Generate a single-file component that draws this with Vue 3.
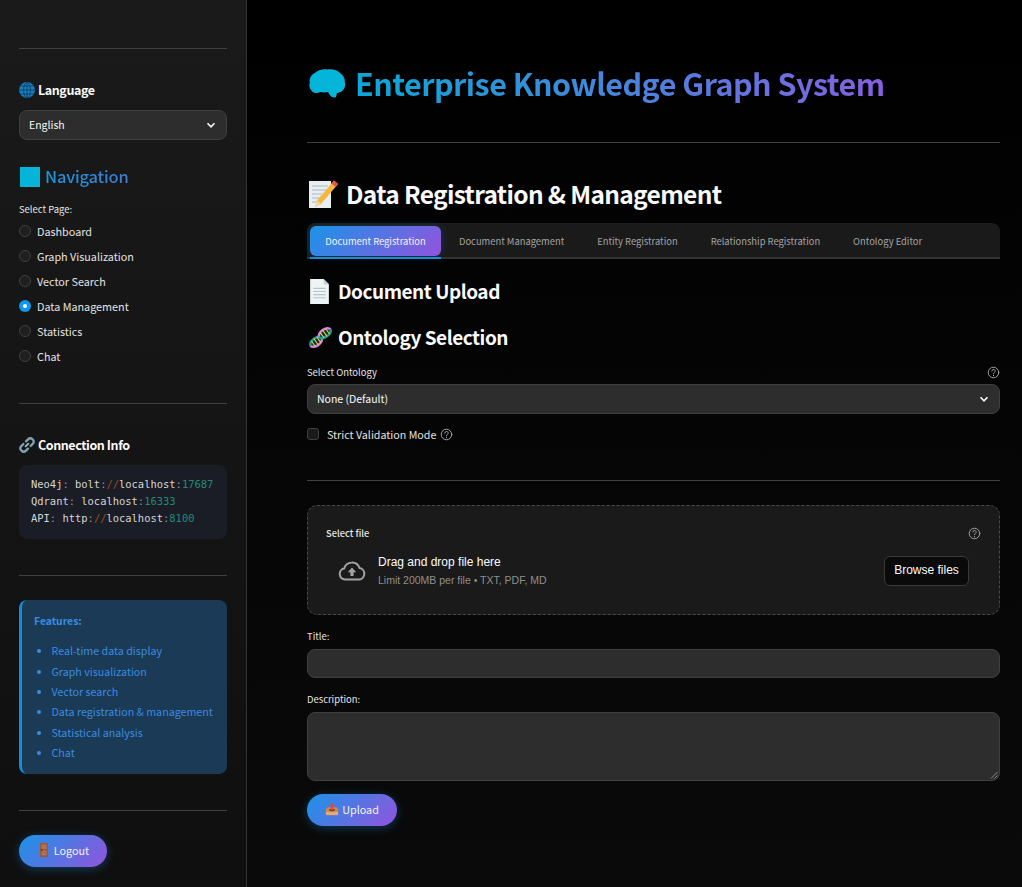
<script setup>
const pages = [
  { name: 'Dashboard' },
  { name: 'Graph Visualization' },
  { name: 'Vector Search' },
  { name: 'Data Management', active: true },
  { name: 'Statistics' },
  { name: 'Chat' }
]

const features = [
  'Real-time data display',
  'Graph visualization',
  'Vector search',
  'Data registration & management',
  'Statistical analysis',
  'Chat'
]

const tabs = [
  'Document Registration',
  'Document Management',
  'Entity Registration',
  'Relationship Registration',
  'Ontology Editor'
]
</script>

<template>
  <div class="app">
    <aside class="sidebar">
      <hr class="rule first" />

      <h4 class="side-head lang-head">
        <svg class="emoji" viewBox="0 0 16 16">
          <circle cx="8" cy="8" r="7.9" fill="#1a80c0" />
          <g fill="none" stroke="#0b3f66" stroke-width="0.9">
            <ellipse cx="8" cy="8" rx="3.4" ry="7.8" />
            <path d="M8 .2v15.600M.2 8h15.600M1.600 4h12.800M1.600 12h12.800" />
          </g>
        </svg>
        Language
      </h4>
      <div class="select side-select">
        <span>English</span>
        <svg class="chev" viewBox="0 0 12 12"><path d="M2.500 4.300 6 7.800l3.500-3.500" /></svg>
      </div>

      <h3 class="nav-head">
        <span class="nav-square"></span>
        <span class="nav-text">Navigation</span>
      </h3>
      <div class="small-label">Select Page:</div>
      <ul class="radios">
        <li v-for="p in pages" :key="p.name" class="radio-row">
          <span class="radio" :class="{ on: p.active }"></span>
          {{ p.name }}
        </li>
      </ul>

      <hr class="rule r2" />

      <h4 class="side-head conn-head">
        <svg class="emoji" viewBox="0 0 16 16" fill="none" stroke-linecap="round">
          <path d="M6.600 9.400 9.400 6.600" stroke="#9dbcc6" stroke-width="1.800" />
          <path d="M7 4.400 9.300 2.100a2.700 2.700 0 0 1 3.900 0l.7.7a2.700 2.700 0 0 1 0 3.900L11.600 9" stroke="#7fa3b0" stroke-width="2.300" />
          <path d="M9 11.600 6.700 13.900a2.700 2.700 0 0 1-3.900 0l-.7-.7a2.700 2.700 0 0 1 0-3.900L4.400 7" stroke="#7fa3b0" stroke-width="2.300" />
        </svg>
        Connection Info
      </h4>
      <pre class="code">Neo4j<i>:</i> bolt<i>:</i><b>//</b>localhost<i>:</i><em>17687</em>
Qdrant<i>:</i> localhost<i>:</i><em>16333</em>
API<i>:</i> http<i>:</i><b>//</b>localhost<i>:</i><em>8100</em></pre>

      <hr class="rule r3" />

      <div class="features">
        <div class="features-title">Features:</div>
        <ul>
          <li v-for="f in features" :key="f">{{ f }}</li>
        </ul>
      </div>

      <hr class="rule r4" />

      <button class="pill logout">
        <svg class="btn-emoji" viewBox="0 0 8 14">
          <rect x="0" y="0" width="8" height="14" fill="#9c5a3c" />
          <rect x="1.500" y="1.500" width="5" height="4.500" fill="#b5704e" />
          <rect x="1.500" y="7.500" width="5" height="5" fill="#b5704e" />
          <rect x="1" y="6.200" width="1.600" height="1.600" fill="#6b3a24" />
        </svg>
        Logout
      </button>
    </aside>

    <main class="main">
      <h1 class="title">
        <svg class="brain" viewBox="0 0 40 32">
          <path d="M20 .5C25-.5 31 1 33.500 4 37 6 39.500 10 39 14c1.500 4 0 9-4 11-2 1-4 1-5 2 0 2 0 4.500-2 4.500-4 .5-6-3.500-7.500-6-3.500.5-6 .5-8.500 0-3 1.500-8 1.500-9.500-1.500C0 22-.5 18 .5 15-.5 11 2 6 6 4.500 9 1.500 15-.5 20 .5z" fill="#05b5d9" />
        </svg>
        <span class="title-text">Enterprise Knowledge Graph System</span>
      </h1>
      <hr class="rule main-r1" />

      <h2 class="page-head">
        <svg class="memo" viewBox="0 0 30 30">
          <rect x="1" y="2" width="22" height="27" fill="#e8eef2" />
          <path d="M4 7h16M4 11h14M4 15h10M4 19h8M4 23h6" stroke="#a9b6bd" stroke-width="1.200" />
          <path d="M26 1.500 30 5 13 25l-6 3 2-6.500z" fill="#f6b73c" />
          <path d="M26 1.500 30 5l-2.500 3-4-3.500z" fill="#e2574c" />
          <path d="M7 28l2-6.500 4 3.500z" fill="#f1d6a8" />
        </svg>
        Data Registration &amp; Management
      </h2>

      <nav class="tabs">
        <div v-for="(t, i) in tabs" :key="t" class="tab" :class="{ active: i === 0 }">{{ t }}</div>
      </nav>

      <h3 class="sec-head doc-head">
        <svg class="sec-icon" viewBox="0 0 24 24">
          <path d="M3 0h13l5 5v19H3z" fill="#eef3f6" />
          <path d="M16 0l5 5h-5z" fill="#bcd0dc" />
          <path d="M6 9h12M6 12h12M6 15h12M6 18h12" stroke="#b6c4cc" stroke-width="1.100" />
        </svg>
        Document Upload
      </h3>
      <h3 class="sec-head onto-head">
        <svg class="sec-icon" viewBox="-2 -1 26 26" fill="none">
          <g transform="rotate(-35 7.500 16.500)">
            <ellipse cx="7.500" cy="16.500" rx="7" ry="4" fill="#16302f" />
            <path d="M.5 16.500a7 4 0 0 1 14 0" stroke="#17a08e" stroke-width="2.600" />
            <path d="M.5 16.500a7 4 0 0 0 14 0" stroke="#e07ee0" stroke-width="2.600" />
            <path d="M4 13v7M7.500 12.500v8M11 13v7" stroke="#d9d84a" stroke-width="1.100" />
          </g>
          <g transform="rotate(-35 16.500 7.500)">
            <ellipse cx="16.500" cy="7.500" rx="7" ry="4" fill="#16302f" />
            <path d="M9.500 7.500a7 4 0 0 1 14 0" stroke="#e07ee0" stroke-width="2.600" />
            <path d="M9.500 7.500a7 4 0 0 0 14 0" stroke="#17a08e" stroke-width="2.600" />
            <path d="M13 4v7M16.500 3.500v8M20 4v7" stroke="#d9d84a" stroke-width="1.100" />
          </g>
        </svg>
        Ontology Selection
      </h3>

      <div class="label-row">
        <span class="small-label">Select Ontology</span>
        <svg class="help" viewBox="0 0 16 16"><circle cx="8" cy="8" r="6.500" /><path d="M6 6.300a2 2 0 1 1 3 1.700c-.7.400-1 .8-1 1.500" /><path d="M8 11.500v.5" /></svg>
      </div>
      <div class="select">
        <span>None (Default)</span>
        <svg class="chev" viewBox="0 0 12 12"><path d="M2.500 4.300 6 7.800l3.500-3.500" /></svg>
      </div>

      <div class="check-row">
        <span class="checkbox"></span>
        Strict Validation Mode
        <svg class="help" viewBox="0 0 16 16"><circle cx="8" cy="8" r="6.500" /><path d="M6 6.300a2 2 0 1 1 3 1.700c-.7.400-1 .8-1 1.500" /><path d="M8 11.500v.5" /></svg>
      </div>

      <hr class="rule main-r2" />

      <section class="uploader">
        <div class="label-row up-label">
          <span class="small-label bold">Select file</span>
          <svg class="help" viewBox="0 0 16 16"><circle cx="8" cy="8" r="6.500" /><path d="M6 6.300a2 2 0 1 1 3 1.700c-.7.400-1 .8-1 1.500" /><path d="M8 11.500v.5" /></svg>
        </div>
        <div class="drop">
          <svg class="cloud" viewBox="0 0 28 20" fill="none">
            <path d="M7.500 18.500H7a5.500 5.500 0 0 1-.8-10.900A8 8 0 0 1 21.500 7a5.800 5.800 0 0 1-.5 11.500z" stroke="#a3a3a3" stroke-width="2" stroke-linejoin="round" />
            <path d="M14 6.500 9.800 11.200h2.600v3.800h3.200v-3.800h2.600z" fill="#a3a3a3" />
          </svg>
          <div class="drop-text">
            <div class="drop-main">Drag and drop file here</div>
            <div class="drop-sub">Limit 200MB per file • TXT, PDF, MD</div>
          </div>
          <button class="browse">Browse files</button>
        </div>
      </section>

      <label class="small-label field-label title-label">Title:</label>
      <div class="input"></div>
      <label class="small-label field-label desc-label">Description:</label>
      <div class="textarea">
        <svg class="grip" viewBox="0 0 8 8"><path d="M7.500 1 1 7.500M7.500 4.500 4.500 7.500" /></svg>
      </div>

      <button class="pill upload">
        <svg class="btn-emoji wide" viewBox="0 0 16 16">
          <path d="M1 8h14v7H1z" fill="#eda869" />
          <path d="M3 6h10l2 2v3H1V8z" fill="#c98650" />
          <path d="M5 8h6v2.500H5z" fill="#6e4a35" />
          <path d="M8 1 11 4.500H9.300V9H6.700V4.500H5z" fill="#e8453c" />
        </svg>
        Upload
      </button>
    </main>
  </div>
</template>

<style scoped>
.app {
  display: flex;
  min-height: 887px;
  font-family: "Noto Sans CJK JP", "Noto Sans", sans-serif;
  color: #fafafa;
  background: linear-gradient(180deg, #000 0%, #0a0a0a 100%);
}

.sidebar {
  box-sizing: border-box;
  flex: 0 0 247px;
  min-width: 0;
  width: 247px;
  padding: 48px 19px 0;
  background: linear-gradient(180deg, #1a1a1a 0%, #0f0f0f 100%);
  border-right: 1px solid #333;
}

.main {
  flex: 1;
  min-width: 0;
  padding: 0 22px 0 60px;
}

.rule {
  border: 0;
  border-top: 1px solid #404040;
  margin: 0;
}

.lang-head { margin-top: 31px; }
.conn-head { margin-top: 31px; }
.r2 { margin-top: 35px; }
.r3 { margin-top: 36px; }
.r4 { margin-top: 36px; }

.side-head {
  display: flex;
  align-items: center;
  gap: 3px;
  height: 20px;
  margin-bottom: 10px;
  font-size: 12.500px;
  font-weight: 700;
  letter-spacing: -0.42px;
  line-height: 20px;
}

.emoji {
  width: 16px;
  height: 16px;
  flex: none;
}

.select {
  box-sizing: border-box;
  display: flex;
  align-items: center;
  justify-content: space-between;
  height: 30px;
  padding: 0 9px 1px 9px;
  background: #2d2d2d;
  border: 1px solid #404040;
  border-radius: 8px;
  font-size: 10.500px;
  color: #fafafa;
}

.chev {
  width: 12px;
  height: 12px;
  fill: none;
  stroke: #fafafa;
  stroke-width: 1.600;
}

.nav-head {
  display: flex;
  align-items: center;
  gap: 5px;
  height: 26px;
  margin: 24px 0 0;
  font-size: 16.500px;
  font-weight: 500;
  letter-spacing: -0.2px;
  line-height: 26px;
}

.nav-square {
  width: 20px;
  height: 20px;
  background: #05b5d9;
  margin-left: 1px;
}

.nav-text {
  position: relative;
  top: -1px;
  color: transparent;
  background: linear-gradient(90deg, #1b97dd, #3f7dd2);
  -webkit-background-clip: text;
  background-clip: text;
}

.small-label {
  display: block;
  font-size: 9.450px;
  line-height: 16px;
  color: #e6e6e6;
}

.sidebar > .small-label { margin-top: 11px; }

.radios {
  list-style: none;
  margin: 1px 0 0;
  padding: 0;
}

.radio-row {
  display: flex;
  align-items: center;
  gap: 6px;
  height: 25px;
  font-size: 10.800px;
  color: #e3e3e3;
}

.radio {
  box-sizing: border-box;
  width: 12px;
  height: 12px;
  border-radius: 50%;
  background: #1f1f1f;
  border: 1px solid #404040;
}

.radio.on {
  background: #0e97ee;
  border: 0;
  position: relative;
}

.radio.on::after {
  content: "";
  position: absolute;
  left: 4px;
  top: 4px;
  width: 4px;
  height: 4px;
  border-radius: 50%;
  background: #fff;
}

.code {
  box-sizing: border-box;
  height: 74px;
  margin: 0;
  padding: 11px 12px;
  background: #1a1c26;
  border-radius: 8px;
  font-family: "DejaVu Sans Mono", monospace;
  font-size: 10.450px;
  line-height: 17px;
  color: #d6d6d6;
  overflow: hidden;
}

.code i { font-style: normal; color: #8a8f98; }
.code b { font-weight: 400; color: #a0491f; }
.code em { font-style: normal; color: #208a78; }

.features {
  box-sizing: border-box;
  height: 174px;
  margin-top: 24px;
  padding: 12px 12px 0 12px;
  background: #1a3a55;
  border-left: 3px solid #0e8fe0;
  border-radius: 8px;
  color: #3b8ce0;
}

.features-title {
  font-size: 10.400px;
  font-weight: 700;
  line-height: 17px;
}

.features ul {
  margin: 12.300px 0 0;
  padding: 0 0 0 17.500px;
  font-size: 10.700px;
}

.features li {
  height: 20.400px;
  line-height: 20.400px;
  white-space: nowrap;
}

.pill {
  display: flex;
  align-items: center;
  justify-content: center;
  gap: 6px;
  height: 32px;
  padding: 0 0 2px;
  border: 0;
  border-radius: 16px;
  background: linear-gradient(135deg, #1a94e8 0%, #9353dd 100%);
  box-shadow: 0 2px 10px rgba(20, 140, 230, 0.35);
  color: #f5f5f5;
  font-family: inherit;
  font-size: 10.800px;
}

.logout {
  width: 88px;
  margin-top: 24px;
  padding-left: 3px;
}

.upload {
  gap: 3px;
  width: 90px;
  margin-top: 13px;
}

.btn-emoji {
  width: 8px;
  height: 14px;
}

.btn-emoji.wide {
  width: 14px;
  height: 14px;
}

.title {
  display: flex;
  align-items: center;
  gap: 9px;
  height: 40px;
  margin: 0;
  padding: 63px 0 0 2px;
  font-size: 30.500px;
  font-weight: 700;
  letter-spacing: -0.53px;
  line-height: 40px;
}

.brain {
  width: 37px;
  height: 29px;
  flex: none;
}

.title-text {
  color: transparent;
  background: linear-gradient(90deg, #0aa8d8 0%, #8560e0 100%);
  -webkit-background-clip: text;
  background-clip: text;
}

.main-r1 { margin-top: 39px; }

.page-head {
  display: flex;
  align-items: center;
  gap: 8px;
  height: 36px;
  margin: 33px 0 0;
  font-size: 24.500px;
  font-weight: 700;
  letter-spacing: -0.67px;
  line-height: 36px;
  padding-left: 1px;
}

.memo {
  width: 30px;
  height: 30px;
}

.tabs {
  box-sizing: border-box;
  display: flex;
  gap: 0;
  height: 36px;
  margin-top: 11px;
  padding: 3px;
  background: #1a1a1a;
  border-bottom: 2px solid #333;
  border-radius: 8px 8px 0 0;
}

.tab {
  display: flex;
  align-items: center;
  height: 30px;
  padding: 0 16.500px 1px;
  box-sizing: border-box;
  font-size: 9.400px;
  color: #a3a3a3;
  white-space: nowrap;
}

.tab.active {
  padding: 0 15.300px 1px;
  margin-right: 1.500px;
  background: linear-gradient(135deg, #1a94e8 0%, #9353dd 100%);
  border-radius: 6px;
  color: #f5f5f5;
  box-shadow: 0 0 8px rgba(14, 143, 224, 0.25);
  position: relative;
}

.tab.active::after {
  content: "";
  position: absolute;
  left: 0;
  right: 0;
  bottom: -3px;
  height: 2px;
  background: #0e8fe0;
}

.sec-head {
  display: flex;
  align-items: center;
  gap: 6px;
  height: 28px;
  margin: 0;
  font-size: 19px;
  font-weight: 700;
  letter-spacing: -0.47px;
  line-height: 28px;
}

.doc-head { margin-top: 18px; }
.onto-head { margin-top: 18px; }

.sec-icon {
  width: 25px;
  height: 25px;
  flex: none;
}

.label-row {
  display: flex;
  align-items: center;
  justify-content: space-between;
  height: 16px;
  margin-top: 13px;
  padding-right: 0;
}

.help {
  width: 13px;
  height: 13px;
  fill: none;
  stroke: #a3a3a3;
  stroke-width: 1.200;
  stroke-linecap: round;
  flex: none;
}

.label-row + .select { margin-top: 4px; }

.check-row {
  display: flex;
  align-items: center;
  height: 16px;
  margin-top: 12px;
  font-size: 10.700px;
  color: #e3e3e3;
}

.checkbox {
  box-sizing: border-box;
  width: 12px;
  height: 12px;
  margin-right: 8px;
  border: 1px solid #404040;
  border-radius: 3px;
  background: #1a1a1a;
}

.check-row .help { margin-left: 4px; }

.main-r2 { margin-top: 38px; }

.uploader {
  box-sizing: border-box;
  height: 110px;
  margin-top: 24px;
  padding: 0 18px;
  background: #1a1a1a;
  border: 1px dashed #4a4a4a;
  border-radius: 10px;
}

.up-label { margin-top: 0; padding-top: 19px; }
.bold { font-size: 9.300px; font-weight: 500; }

.drop {
  display: flex;
  align-items: center;
  margin-top: 12px;
  padding: 0 12px;
}

.cloud {
  width: 28px;
  height: 20px;
  flex: none;
  margin-right: 12px;
}

.drop-text { flex: 1; }

.drop-main {
  font-family: "Liberation Sans", Arial, sans-serif;
  font-size: 12px;
  line-height: 18px;
  color: #fafafa;
}

.drop-sub {
  font-family: "Liberation Sans", Arial, sans-serif;
  font-size: 10.500px;
  line-height: 17px;
  margin-top: 1px;
  color: #8f8f8f;
}

.browse {
  width: 85px;
  height: 30px;
  padding: 0 0 2px;
  background: #0a0a0a;
  border: 1px solid #3a3a3a;
  border-radius: 6px;
  color: #fafafa;
  font-family: "Liberation Sans", Arial, sans-serif;
  font-size: 12px;
}

.field-label { height: 16px; }
.title-label { margin-top: 13px; }
.desc-label { margin-top: 13px; }

.input {
  box-sizing: border-box;
  height: 29px;
  margin-top: 5px;
  background: #2d2d2d;
  border: 1px solid #404040;
  border-radius: 8px;
}

.textarea {
  box-sizing: border-box;
  position: relative;
  height: 69px;
  margin-top: 5px;
  background: #2d2d2d;
  border: 1px solid #404040;
  border-radius: 8px;
}

.grip {
  position: absolute;
  right: 1px;
  bottom: 1px;
  width: 8px;
  height: 8px;
  fill: none;
  stroke: #8a8a8a;
}
</style>

<style>
html, body {
  background: #000;
}
</style>
